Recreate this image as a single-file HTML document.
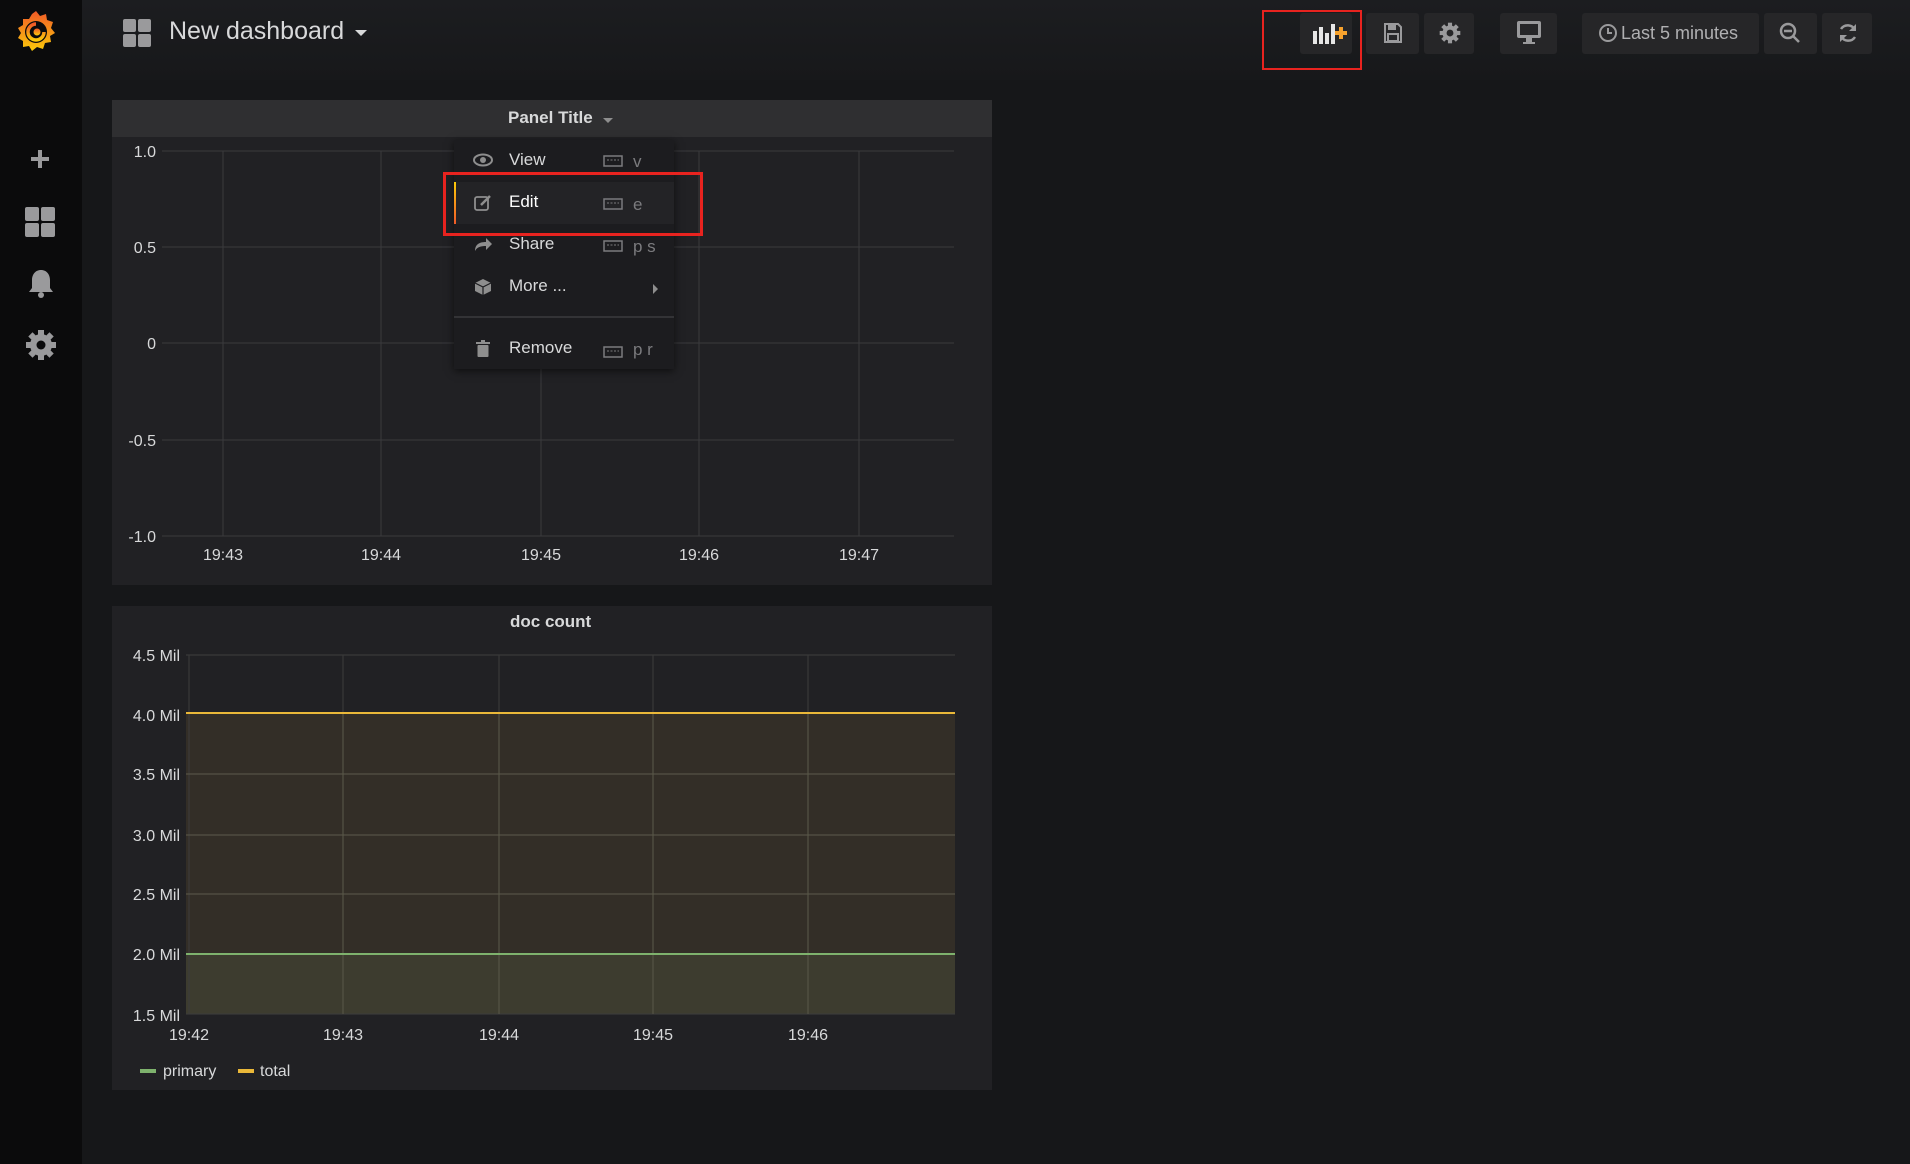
<!DOCTYPE html>
<html><head><meta charset="utf-8"><style>
*{margin:0;padding:0;box-sizing:border-box}
body{width:1910px;height:1164px;background:#161719;font-family:"Liberation Sans",sans-serif;position:relative;overflow:hidden;color:#d8d9da}
.abs{position:absolute}
.side{left:0;top:0;width:82px;height:1164px;background:#0b0b0c}
.btn{position:absolute;top:13px;height:41px;background:#262628;border-radius:3px}
.panel{position:absolute;background:#212124}
.t{position:absolute;font-size:16px;color:#d8d9da;white-space:nowrap}
.mi{position:absolute;left:509px;font-size:17px;color:#d8d9da}
.mk{position:absolute;left:633px;font-size:17px;color:#7b7b7e}
</style></head><body>
<div class="abs" style="left:82px;top:0;width:1828px;height:80px;background:linear-gradient(#1c1d20,#17181a)"></div>
<div class="abs side"></div>
<!-- logo -->
<svg class="abs" style="left:14px;top:8px" width="44" height="48" viewBox="0 0 44 48">
<defs><linearGradient id="g" x1="0" y1="1" x2="0" y2="0"><stop offset="0" stop-color="#fbca0a"/><stop offset="1" stop-color="#f05a28"/></linearGradient></defs>
<path d="M22 3l4 5 6-2 1 6 6 2-2 6 4 5-5 3 1 6-6 1-2 6-6-2-5 4-3-5-6 1 0-6-5-3 3-5-3-5 5-3 0-6 6 0 3-5z" fill="url(#g)"/>
<circle cx="22" cy="24" r="11" fill="#0b0b0c"/>
<path d="M22 16a8 8 0 1 0 8 8" fill="none" stroke="url(#g)" stroke-width="3.5"/>
<circle cx="23" cy="24" r="3.5" fill="url(#g)"/>
</svg>
<!-- sidebar icons -->
<div class="abs" style="left:31px;top:157px;width:18px;height:4px;background:#9a9a9c"></div>
<div class="abs" style="left:38px;top:150px;width:4px;height:18px;background:#9a9a9c"></div>
<svg class="abs" style="left:25px;top:207px" width="32" height="32"><rect x="0" y="0" width="14" height="14" rx="2" fill="#9a9a9c"/><rect x="16" y="0" width="14" height="14" rx="2" fill="#9a9a9c"/><rect x="0" y="16" width="14" height="14" rx="2" fill="#9a9a9c"/><rect x="16" y="16" width="14" height="14" rx="2" fill="#9a9a9c"/></svg>
<svg class="abs" style="left:27px;top:268px" width="28" height="32"><path d="M14 2c-6 0-9 5-9 10v8l-3 4h24l-3-4v-8c0-5-3-10-9-10z" fill="#9a9a9c"/><circle cx="14" cy="27" r="3" fill="#9a9a9c"/></svg>
<svg class="abs" style="left:25px;top:329px" width="32" height="32" viewBox="0 0 32 32"><g fill="#9a9a9c"><circle cx="16" cy="16" r="11"/><rect x="13" y="1" width="6" height="30"/><rect x="1" y="13" width="30" height="6"/><rect x="13" y="1" width="6" height="30" transform="rotate(45 16 16)"/><rect x="13" y="1" width="6" height="30" transform="rotate(-45 16 16)"/></g><circle cx="16" cy="16" r="4.5" fill="#0b0b0c"/></svg>
<!-- title -->
<svg class="abs" style="left:123px;top:19px" width="28" height="28"><rect x="0" y="0" width="13" height="13" rx="2" fill="#9a9a9c"/><rect x="15" y="0" width="13" height="13" rx="2" fill="#9a9a9c"/><rect x="0" y="15" width="13" height="13" rx="2" fill="#9a9a9c"/><rect x="15" y="15" width="13" height="13" rx="2" fill="#9a9a9c"/></svg>
<div class="t" style="left:169px;top:17px;font-size:25px;color:#d8d9da">New dashboard</div>
<div class="abs" style="left:355px;top:30px;border:6px solid transparent;border-top:6px solid #d8d9da"></div>
<!-- toolbar -->
<div class="btn" style="left:1300px;width:52px"></div>
<svg class="abs" style="left:1313px;top:22px" width="38" height="22"><rect x="0" y="9" width="4" height="13" fill="#e6e6e6"/><rect x="6" y="5" width="4" height="17" fill="#e6e6e6"/><rect x="12" y="11" width="4" height="11" fill="#e6e6e6"/><rect x="18" y="2" width="4" height="20" fill="#e6e6e6"/><rect x="22" y="9" width="12" height="4" fill="#f7a22d"/><rect x="26" y="5" width="4" height="12" fill="#f7a22d"/></svg>
<div class="btn" style="left:1366px;width:53px"></div>
<svg class="abs" style="left:1383px;top:22px" width="20" height="22"><path d="M2 2h13l3 3v15H2z" fill="none" stroke="#9a9a9c" stroke-width="2"/><rect x="5" y="3" width="8" height="5" fill="#9a9a9c"/><rect x="5" y="12" width="10" height="7" fill="none" stroke="#9a9a9c" stroke-width="2"/></svg>
<div class="btn" style="left:1424px;width:50px"></div>
<svg class="abs" style="left:1439px;top:22px" width="22" height="22" viewBox="0 0 32 32"><g fill="#9a9a9c"><circle cx="16" cy="16" r="11"/><rect x="13" y="1" width="6" height="30"/><rect x="1" y="13" width="30" height="6"/><rect x="13" y="1" width="6" height="30" transform="rotate(45 16 16)"/><rect x="13" y="1" width="6" height="30" transform="rotate(-45 16 16)"/></g><circle cx="16" cy="16" r="5" fill="#262628"/></svg>
<div class="btn" style="left:1500px;width:57px"></div>
<svg class="abs" style="left:1516px;top:20px" width="26" height="26"><rect x="1" y="1" width="24" height="17" rx="2" fill="#9a9a9c"/><rect x="4" y="4" width="18" height="11" fill="#262628"/><rect x="10" y="18" width="6" height="4" fill="#9a9a9c"/><rect x="7" y="22" width="12" height="2" fill="#9a9a9c"/></svg>
<div class="btn" style="left:1582px;width:177px"></div>
<svg class="abs" style="left:1598px;top:23px" width="20" height="20"><circle cx="10" cy="10" r="8" fill="none" stroke="#9a9a9c" stroke-width="2"/><path d="M10 5v5h4" fill="none" stroke="#9a9a9c" stroke-width="2"/></svg>
<div class="t" style="left:1621px;top:23px;font-size:18px;color:#b0b0b2">Last 5 minutes</div>
<div class="btn" style="left:1764px;width:53px"></div>
<svg class="abs" style="left:1779px;top:22px" width="22" height="22"><circle cx="9" cy="9" r="7" fill="none" stroke="#9a9a9c" stroke-width="2.5"/><path d="M5 9h8M14 14l6 6" stroke="#9a9a9c" stroke-width="2.5"/></svg>
<div class="btn" style="left:1822px;width:50px"></div>
<svg class="abs" style="left:1837px;top:22px" width="22" height="22"><path d="M18 8A8 8 0 0 0 4 7M4 14a8 8 0 0 0 14 1" fill="none" stroke="#9a9a9c" stroke-width="2.5"/><path d="M19 2v7h-7zM3 20v-7h7z" fill="#9a9a9c"/></svg>
<div class="abs" style="left:1262px;top:10px;width:100px;height:60px;border:2px solid #e8231f"></div>

<!-- panel 1 -->
<div class="panel" style="left:112px;top:100px;width:880px;height:485px"></div>
<div class="abs" style="left:112px;top:100px;width:880px;height:37px;background:#2f2f31"></div>
<div class="t" style="left:508px;top:108px;font-size:17px;font-weight:bold;color:#d8d9da">Panel Title</div>
<div class="abs" style="left:603px;top:118px;border:5px solid transparent;border-top:5px solid #8e8e8e"></div>
<svg class="abs" style="left:112px;top:137px" width="880" height="448">
<g stroke="#3a3a3d" stroke-width="1">
<line x1="50" y1="14" x2="842" y2="14"/><line x1="50" y1="110" x2="842" y2="110"/><line x1="50" y1="206" x2="842" y2="206"/><line x1="50" y1="303" x2="842" y2="303"/><line x1="50" y1="399" x2="842" y2="399"/>
<line x1="111" y1="14" x2="111" y2="399"/><line x1="269" y1="14" x2="269" y2="399"/><line x1="429" y1="14" x2="429" y2="399"/><line x1="587" y1="14" x2="587" y2="399"/><line x1="747" y1="14" x2="747" y2="399"/>
</g>
<g fill="#d8d9da" font-family="Liberation Sans" font-size="16">
<text x="44" y="20" text-anchor="end">1.0</text><text x="44" y="116" text-anchor="end">0.5</text><text x="44" y="212" text-anchor="end">0</text><text x="44" y="309" text-anchor="end">-0.5</text><text x="44" y="405" text-anchor="end">-1.0</text>
<text x="111" y="423" text-anchor="middle">19:43</text><text x="269" y="423" text-anchor="middle">19:44</text><text x="429" y="423" text-anchor="middle">19:45</text><text x="587" y="423" text-anchor="middle">19:46</text><text x="747" y="423" text-anchor="middle">19:47</text>
</g>
</svg>
<!-- menu -->
<div class="abs" style="left:454px;top:140px;width:220px;height:229px;background:#1c1c1f;box-shadow:0 2px 8px rgba(0,0,0,.6)"></div>
<div class="abs" style="left:454px;top:182px;width:220px;height:42px;background:#232326"></div>
<div class="abs" style="left:454px;top:182px;width:2px;height:42px;background:linear-gradient(#fbca0a,#f05a28)"></div>
<div class="abs" style="left:454px;top:316px;width:220px;height:2px;background:#333336"></div>
<svg class="abs" style="left:473px;top:153px" width="20" height="14"><ellipse cx="10" cy="7" rx="9" ry="5.5" fill="none" stroke="#8e8e8e" stroke-width="2"/><circle cx="10" cy="7" r="3" fill="#8e8e8e"/></svg>
<svg class="abs" style="left:474px;top:194px" width="18" height="18"><rect x="1" y="3" width="13" height="13" rx="2" fill="none" stroke="#8e8e8e" stroke-width="1.8"/><path d="M7 11l9-9" stroke="#8e8e8e" stroke-width="2.5"/></svg>
<svg class="abs" style="left:474px;top:236px" width="18" height="16"><path d="M1 15c0-7 5-9 11-9V2l6 6-6 6v-4c-5 0-9 1-11 5z" fill="#8e8e8e"/></svg>
<svg class="abs" style="left:474px;top:278px" width="18" height="18"><path d="M9 1l8 4v8l-8 4-8-4V5z" fill="#8e8e8e"/><path d="M1 5l8 4 8-4M9 9v8" stroke="#1c1c1f" stroke-width="1.2" fill="none"/></svg>
<svg class="abs" style="left:476px;top:340px" width="14" height="17"><rect x="0" y="2" width="14" height="2" fill="#8e8e8e"/><rect x="5" y="0" width="4" height="2" fill="#8e8e8e"/><rect x="1.5" y="5" width="11" height="12" rx="1" fill="#8e8e8e"/></svg>
<div class="mi" style="top:150px">View</div>
<div class="mi" style="top:192px;color:#fff">Edit</div>
<div class="mi" style="top:234px">Share</div>
<div class="mi" style="top:276px">More ...</div>
<div class="mi" style="top:338px">Remove</div>
<div class="abs" style="left:653px;top:284px;border:5px solid transparent;border-left:5px solid #8e8e8e"></div>
<svg class="abs" style="left:603px;top:154px" width="20" height="210">
<g fill="none" stroke="#7b7b7e" stroke-width="1.5"><rect x="1" y="2" width="18" height="10"/><rect x="1" y="45" width="18" height="10"/><rect x="1" y="87" width="18" height="10"/><rect x="1" y="193" width="18" height="10"/></g>
<g stroke="#7b7b7e" stroke-dasharray="2 1.5"><line x1="4" y1="6" x2="16" y2="6"/><line x1="4" y1="49" x2="16" y2="49"/><line x1="4" y1="91" x2="16" y2="91"/><line x1="4" y1="197" x2="16" y2="197"/></g>
</svg>
<div class="mk" style="top:152px">v</div>
<div class="mk" style="top:195px">e</div>
<div class="mk" style="top:237px">p s</div>
<div class="mk" style="top:340px">p r</div>
<div class="abs" style="left:443px;top:172px;width:260px;height:64px;border:3px solid #e8231f"></div>

<!-- panel 2 -->
<div class="panel" style="left:112px;top:606px;width:880px;height:484px"></div>
<div class="t" style="left:510px;top:612px;font-size:17px;font-weight:bold">doc count</div>
<svg class="abs" style="left:112px;top:606px" width="880" height="484">
<rect x="74" y="107" width="769" height="241" fill="#332e27"/>
<rect x="74" y="348" width="769" height="60" fill="#3d3c2f"/>
<g stroke="#3c3c3c" stroke-width="1.2" opacity=".9">
<line x1="74" y1="49" x2="843" y2="49"/><line x1="74" y1="168" x2="843" y2="168"/><line x1="74" y1="229" x2="843" y2="229"/><line x1="74" y1="288" x2="843" y2="288"/><line x1="74" y1="408" x2="843" y2="408"/>
<line x1="77" y1="49" x2="77" y2="408"/><line x1="231" y1="49" x2="231" y2="408"/><line x1="387" y1="49" x2="387" y2="408"/><line x1="541" y1="49" x2="541" y2="408"/><line x1="696" y1="49" x2="696" y2="408"/>
</g>
<g stroke="#5a5848" stroke-width="1"><line x1="74" y1="168" x2="843" y2="168"/><line x1="74" y1="229" x2="843" y2="229"/><line x1="74" y1="288" x2="843" y2="288"/><line x1="231" y1="107" x2="231" y2="408"/><line x1="387" y1="107" x2="387" y2="408"/><line x1="541" y1="107" x2="541" y2="408"/><line x1="696" y1="107" x2="696" y2="408"/></g>
<line x1="74" y1="107" x2="843" y2="107" stroke="#eab839" stroke-width="2"/>
<line x1="74" y1="348" x2="843" y2="348" stroke="#7eb26d" stroke-width="2"/>
<g fill="#d8d9da" font-family="Liberation Sans" font-size="16">
<text x="68" y="55" text-anchor="end">4.5 Mil</text><text x="68" y="115" text-anchor="end">4.0 Mil</text><text x="68" y="174" text-anchor="end">3.5 Mil</text><text x="68" y="235" text-anchor="end">3.0 Mil</text><text x="68" y="294" text-anchor="end">2.5 Mil</text><text x="68" y="354" text-anchor="end">2.0 Mil</text><text x="68" y="415" text-anchor="end">1.5 Mil</text>
<text x="77" y="434" text-anchor="middle">19:42</text><text x="231" y="434" text-anchor="middle">19:43</text><text x="387" y="434" text-anchor="middle">19:44</text><text x="541" y="434" text-anchor="middle">19:45</text><text x="696" y="434" text-anchor="middle">19:46</text>
<text x="51" y="470">primary</text><text x="148" y="470">total</text>
</g>
<rect x="28" y="463" width="16" height="4" fill="#7eb26d"/>
<rect x="126" y="463" width="16" height="4" fill="#eab839"/>
</svg>
</body></html>
